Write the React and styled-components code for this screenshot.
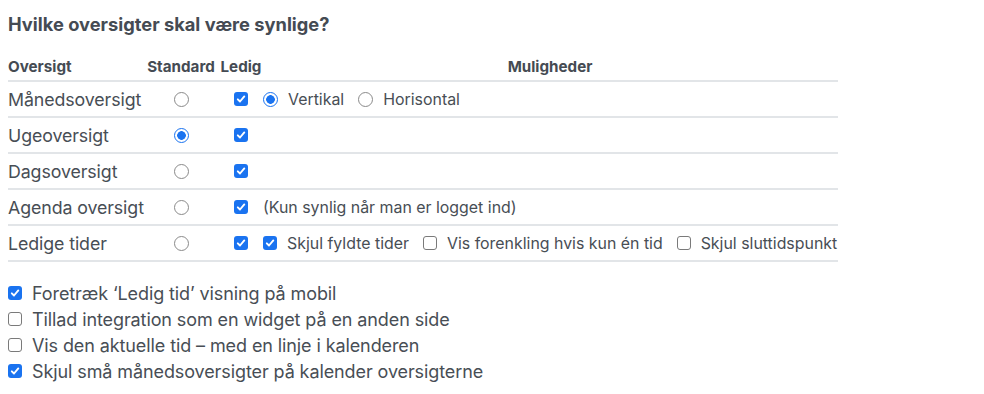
import React from "react";
import styled, { createGlobalStyle } from "styled-components";

const Global = createGlobalStyle`
  html, body { margin: 0; padding: 0; background: #fff; }
  body {
    padding: 8px;
    font-family: Inter, "Liberation Sans", Arial, sans-serif;
    color: #484e55;
    -webkit-font-smoothing: antialiased;
  }
`;

const BLUE = "#1a73f0";

const Page = styled.div`
  display: flex;
  flex-direction: column;
`;

const Title = styled.h3`
  margin: 0;
  height: 32px;
  display: flex;
  align-items: center;
  font-size: 18.3px;
  font-weight: 700;
  color: #454b53;
`;

const Table = styled.div`
  width: 830px;
  margin-top: 12px;
  display: grid;
  grid-template-columns: 134px 78px 42px 1fr;
`;

const HeadCell = styled.div`
  height: 28px;
  display: flex;
  align-items: center;
  justify-content: ${(p) => p.$align || "flex-start"};
  font-size: 15.2px;
  font-weight: 700;
  color: #454b53;
  border-bottom: 2px solid #e2e5e8;
`;

const Cell = styled.div`
  height: 34px;
  display: flex;
  align-items: center;
  justify-content: ${(p) => p.$align || "flex-start"};
  padding-left: ${(p) => p.$pad || 0}px;
  gap: 14px;
  border-bottom: 2px solid #e2e5e8;
  white-space: nowrap;
`;

const RowLabel = styled.span`
  font-size: 17.8px;
  letter-spacing: -0.1px;
`;

const OptText = styled.span`
  font-size: 15.9px;
`;

const Option = styled.label`
  display: inline-flex;
  align-items: center;
  gap: 10px;
  font-size: 15.9px;
`;

const Box = styled.span`
  width: 14px;
  height: 14px;
  box-sizing: border-box;
  border-radius: 3px;
  flex: none;
  display: inline-flex;
  align-items: center;
  justify-content: center;
  background: ${(p) => (p.$on ? BLUE : "#fff")};
  border: ${(p) => (p.$on ? "none" : "1px solid #7a7a7a")};
`;

const Radio = styled.span`
  width: 15px;
  height: 15px;
  box-sizing: border-box;
  border-radius: 50%;
  flex: none;
  display: inline-block;
  border: ${(p) => (p.$on ? `1.5px solid ${BLUE}` : "1px solid #8a8a8a")};
  background: ${(p) =>
    p.$on ? `radial-gradient(circle, ${BLUE} 0 4px, #fff 4.6px)` : "#fff"};
`;

const Check = ({ on }) => (
  <Box $on={on}>
    {on && (
      <svg width="10" height="10" viewBox="0 0 10 10">
        <path
          d="M1.8 5.3 L4 7.5 L8.3 2.4"
          fill="none"
          stroke="#fff"
          strokeWidth="1.9"
          strokeLinecap="round"
          strokeLinejoin="round"
        />
      </svg>
    )}
  </Box>
);

const Extras = styled.div`
  margin-top: 18px;
  display: flex;
  flex-direction: column;
`;

const ExtraRow = styled.label`
  height: 26px;
  display: flex;
  align-items: center;
  gap: 10px;
  font-size: 18px;
  letter-spacing: -0.1px;
`;

const rows = [
  {
    label: "Månedsoversigt",
    std: false,
    opts: (
      <>
        <Option>
          <Radio $on />
          Vertikal
        </Option>
        <Option>
          <Radio />
          Horisontal
        </Option>
      </>
    ),
  },
  { label: "Ugeoversigt", std: true },
  { label: "Dagsoversigt", std: false },
  {
    label: "Agenda oversigt",
    std: false,
    opts: <OptText>(Kun synlig når man er logget ind)</OptText>,
  },
  {
    label: "Ledige tider",
    std: false,
    opts: (
      <>
        <Option>
          <Check on />
          Skjul fyldte tider
        </Option>
        <Option>
          <Check />
          Vis forenkling hvis kun én tid
        </Option>
        <Option>
          <Check />
          Skjul sluttidspunkt
        </Option>
      </>
    ),
  },
];

const extras = [
  { on: true, text: "Foretræk ‘Ledig tid’ visning på mobil" },
  { on: false, text: "Tillad integration som en widget på en anden side" },
  { on: false, text: "Vis den aktuelle tid – med en linje i kalenderen" },
  { on: true, text: "Skjul små månedsoversigter på kalender oversigterne" },
];

export default function App() {
  return (
    <Page>
      <Global />
      <Title>Hvilke oversigter skal være synlige?</Title>
      <Table>
        <HeadCell>Oversigt</HeadCell>
        <HeadCell $align="center">Standard</HeadCell>
        <HeadCell $align="center">Ledig</HeadCell>
        <HeadCell $align="center">Muligheder</HeadCell>
        {rows.map((r) => (
          <React.Fragment key={r.label}>
            <Cell>
              <RowLabel>{r.label}</RowLabel>
            </Cell>
            <Cell $align="center">
              <Radio $on={r.std} />
            </Cell>
            <Cell $align="center">
              <Check on />
            </Cell>
            <Cell $pad={1}>{r.opts}</Cell>
          </React.Fragment>
        ))}
      </Table>
      <Extras>
        {extras.map((e) => (
          <ExtraRow key={e.text}>
            <Check on={e.on} />
            {e.text}
          </ExtraRow>
        ))}
      </Extras>
    </Page>
  );
}
